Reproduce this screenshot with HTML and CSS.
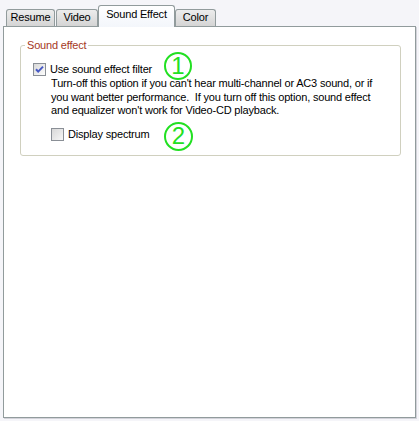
FILE: index.html
```html
<!DOCTYPE html>
<html>
<head>
<meta charset="utf-8">
<link rel="stylesheet" href="styles.css">
</head>
<body>
<div class="tabs">
  <div class="tab t-resume">Resume</div>
  <div class="tab t-video">Video</div>
  <div class="tab active t-sound">Sound Effect</div>
  <div class="tab t-color">Color</div>
</div>
<div class="panel">
  <fieldset class="group">
    <legend>Sound effect</legend>
    <div class="opt first">
      <span class="cb">
        <svg width="13" height="13" viewBox="0 0 13 13"><defs><linearGradient id="g1" x1="0" y1="0" x2="1" y2="1"><stop offset="0" stop-color="#d6d6d6"/><stop offset="1" stop-color="#ffffff"/></linearGradient></defs><rect x="0.5" y="0.5" width="12" height="12" fill="url(#g1)" stroke="#8a8f96"/><path d="M3 6.2 L5.2 8.6 L10 3.6" fill="none" stroke="#4759c4" stroke-width="2"/></svg>
      </span>
      <span>Use sound effect filter</span>
    </div>
    <p class="desc">Turn-off this option if you can't hear multi-channel or AC3 sound, or if<br>you want better performance.&nbsp; If you turn off this option, sound effect<br>and equalizer won't work for Video-CD playback.</p>
    <div class="opt sub">
      <span class="cb">
        <svg width="13" height="13" viewBox="0 0 13 13"><defs><linearGradient id="g2" x1="0" y1="0" x2="1" y2="1"><stop offset="0" stop-color="#d6d6d6"/><stop offset="1" stop-color="#f8f8f8"/></linearGradient></defs><rect x="0.5" y="0.5" width="12" height="12" fill="url(#g2)" stroke="#8a8f96"/></svg>
      </span>
      <span>Display spectrum</span>
    </div>
  </fieldset>
  <div class="mark m1">1</div>
  <div class="mark m2">2</div>
</div>
</body>
</html>
```
FILE: styles.css
```css
html, body {
  margin: 0;
  padding: 0;
}
body {
  width: 419px;
  height: 421px;
  overflow: hidden;
  background: #f5f5f9;
  font-family: "Liberation Sans", Arial, sans-serif;
  font-size: 11px;
  letter-spacing: -0.18px;
  color: #000;
}
.tabs {
  display: flex;
  align-items: flex-end;
  height: 26px;
  padding-left: 6px;
  position: relative;
  z-index: 1;
}
.tab {
  box-sizing: border-box;
  height: 17px;
  line-height: 15px;
  text-align: center;
  border: 1px solid #919b9c;
  border-bottom: none;
  border-radius: 3px 3px 0 0;
  background: linear-gradient(#ececec, #d4d4d4);
  white-space: nowrap;
}
.t-resume { width: 49px; }
.t-video { width: 42px; margin-left: 1px; }
.t-sound { width: 77px; margin-left: 0; }
.t-color { width: 41px; margin-left: 0; }
.tab.active {
  height: 22px;
  margin-bottom: -1px;
  line-height: 17px;
  background: linear-gradient(#ffffff, #f3f6fb);
  border-color: #919b9c;
}
.panel {
  position: relative;
  box-sizing: border-box;
  margin: 0 3px;
  height: 392px;
  border: 1px solid #919b9c;
  background: #fff;
  box-shadow: 1px 1px 0 #d3d3da;
}
.group {
  margin: 12px 14px 0 16px;
  padding: 0 0 14px 12px;
  border: 1px solid #d0d0bf;
  border-radius: 3px;
}
.group legend {
  margin-left: -8px;
  padding: 0 2px;
  line-height: 13px;
  color: #a5381e;
}
.opt {
  display: flex;
  align-items: center;
  gap: 4px;
  height: 13px;
  line-height: 13px;
  white-space: nowrap;
}
.opt.first {
  margin-top: 11px;
}
.cb {
  display: block;
  width: 13px;
  height: 13px;
}
.cb svg {
  display: block;
}
.desc {
  margin: 1px 0 0 18px;
  line-height: 13.5px;
  white-space: nowrap;
}
.opt.sub {
  margin: 10px 0 0 18px;
}
.mark {
  position: absolute;
  box-sizing: border-box;
  width: 28px;
  height: 28px;
  border: 2.5px solid #22e022;
  border-radius: 50%;
  color: #22e022;
  font-size: 24px;
  letter-spacing: 0;
  line-height: 23px;
  text-align: center;
}
.m1 { left: 160px; top: 25px; }
.m2 { left: 160px; top: 95px; width: 29px; height: 29px; line-height: 24px; }
```
